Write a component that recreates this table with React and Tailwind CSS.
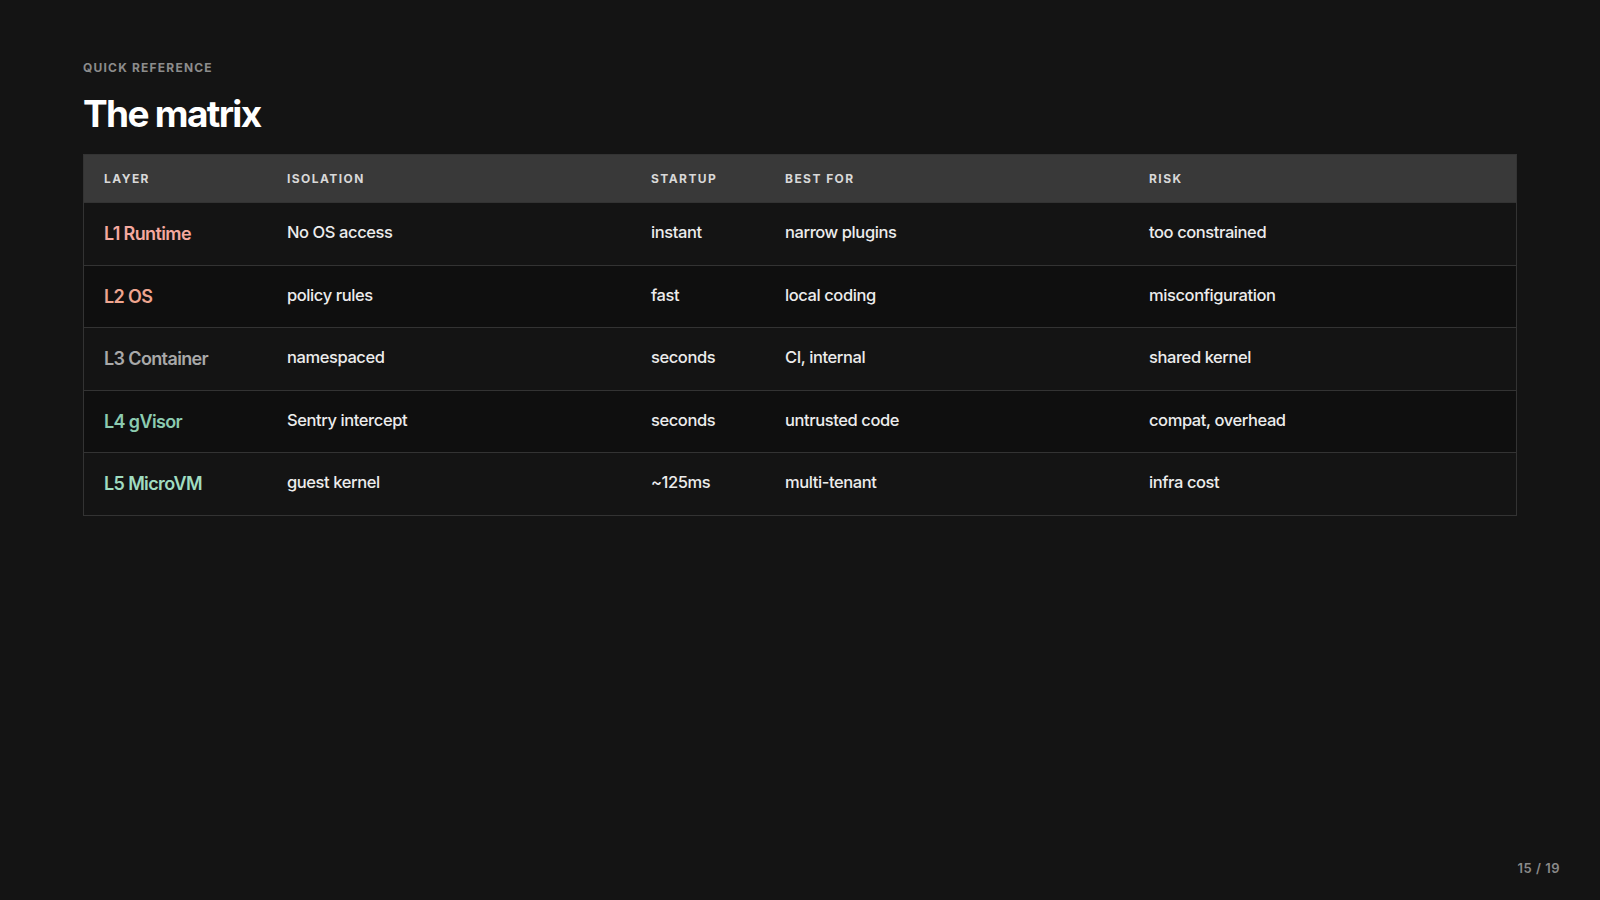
import React from "react";

// Rows of the quick reference matrix
const rows = [
  { layer: "L1 Runtime", color: "text-[#f5a99f]", isolation: "No OS access", startup: "instant", best: "narrow plugins", risk: "too constrained" },
  { layer: "L2 OS", color: "text-[#eea58f]", isolation: "policy rules", startup: "fast", best: "local coding", risk: "misconfiguration" },
  { layer: "L3 Container", color: "text-[#a9a9a9]", isolation: "namespaced", startup: "seconds", best: "CI, internal", risk: "shared kernel" },
  { layer: "L4 gVisor", color: "text-[#8ccbb0]", isolation: "Sentry intercept", startup: "seconds", best: "untrusted code", risk: "compat, overhead" },
  { layer: "L5 MicroVM", color: "text-[#a0dcc0]", isolation: "guest kernel", startup: "~125ms", best: "multi-tenant", risk: "infra cost" },
];

const cols = "grid grid-cols-[183px_364px_134px_364px_1fr]";

export default function App() {
  return (
    <div
      className="relative w-[1600px] h-[900px] bg-[#141414] text-[#ececec] overflow-hidden"
      style={{ fontFamily: "Inter, 'Noto Sans', sans-serif" }}
    >
      <div className="pl-[83px] pr-[83px] pt-[61px]">
        <div className="text-[12px] font-bold tracking-[0.1em] text-[#8c8c8c] leading-[14px]">
          QUICK REFERENCE
        </div>
        <h1 className="mt-[14px] text-[37px] font-bold tracking-[-0.045em] text-white leading-[50px]">
          The matrix
        </h1>

        <div className="mt-[15px] border border-[#333]">
          {/* Header */}
          <div className={`${cols} h-[47px] items-center bg-[#393939] text-[12px] font-bold tracking-[0.12em] text-[#d8d8d8]`}>
            <div className="pl-[20px]">LAYER</div>
            <div className="pl-[20px]">ISOLATION</div>
            <div className="pl-[20px]">STARTUP</div>
            <div className="pl-[20px]">BEST FOR</div>
            <div className="pl-[20px]">RISK</div>
          </div>

          {rows.map((r, i) => (
            <div
              key={r.layer}
              className={`${cols} h-[62.5px] pb-[2px] items-center border-t border-[#333] text-[16.5px] font-medium tracking-[-0.025em] ${i % 2 === 1 ? "bg-[#0f0f0f]" : "bg-[#141414]"}`}
            >
              <div className={`pl-[20px] pt-[2px] text-[18px] font-semibold tracking-[-0.035em] ${r.color}`}>{r.layer}</div>
              <div className="pl-[20px]">{r.isolation}</div>
              <div className="pl-[20px]">{r.startup}</div>
              <div className="pl-[20px]">{r.best}</div>
              <div className="pl-[20px]">{r.risk}</div>
            </div>
          ))}
        </div>
      </div>

      <div className="absolute right-[40px] bottom-[22px] text-[13px] font-semibold tracking-[0.04em] text-[#8a8a8a]">
        15 / 19
      </div>
    </div>
  );
}
